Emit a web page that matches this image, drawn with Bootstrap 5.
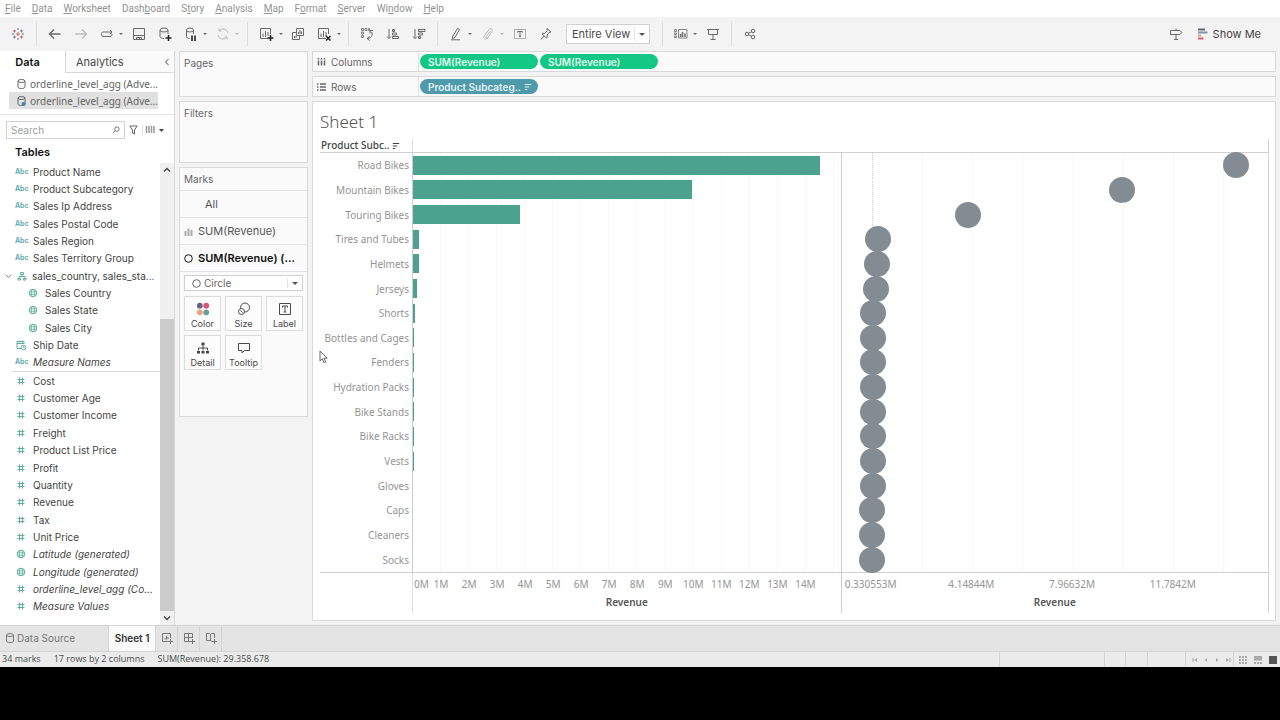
<!DOCTYPE html>
<html lang="en">
<head>
<meta charset="utf-8">
<meta name="viewport" content="width=device-width, initial-scale=1">
<title>Sheet 1</title>
<link href="https://cdn.jsdelivr.net/npm/bootstrap@5.3.0/dist/css/bootstrap.min.css" rel="stylesheet">
<style>
:root{--line:#d9d9d9;--ink:#4a4a4a;--teal:#4ba28f}
body{font-family:Inter,"Liberation Sans",sans-serif;font-size:10px;line-height:14px;color:var(--ink);background:#000}
svg{fill:none;flex:none}
svg:not([stroke]){stroke:currentColor}
button,select,input{font:inherit;color:inherit}
.app-shell{background:#f3f3f3}
.menu-bar{height:17px;gap:11px;padding:2px 5px 0;background:#fff;font-family:Roboto,sans-serif}
.menu-bar a{color:#929292;text-decoration:none}
.tool-bar{height:34px;padding:0 5px}
.tool-btn{border:0;background:none;padding:0;width:26px;height:26px;display:flex;align-items:center;justify-content:center;color:#6a6a6a}
.tool-btn.with-menu{width:32px;padding-left:2px;gap:5px}
.tool-btn.with-menu::after{content:"";border:2px solid transparent;border-top:2px solid currentColor;border-bottom:0}
.tool-btn.dim{color:#bbb}
.tool-btn.show-me{width:auto;font-size:11px;color:#444;gap:4px;padding:0 4px;margin:0 10px 0 4px}
.tool-sep{width:1px;height:24px;margin:0 5px;background:#dcdcdc}
.pick{position:relative;background:#fff;border:1px solid #d0d0d0}
.pick select{appearance:none;border:0;background:none;width:100%;height:100%;padding:0 0 0 5px;outline:0;display:block}
.pick::after{content:"";position:absolute;right:4px;top:50%;margin-top:-1px;border:3px solid transparent;border-top-color:#555;border-bottom:0;pointer-events:none}
.pick::before{content:"";position:absolute;right:14px;top:2px;bottom:2px;width:1px;background:#e4e4e4}
.view-pick{width:84px;height:20px;margin:0 7px;font-size:11px}
.side-pane{width:175px;background:#fff;border-right:1px solid var(--line)}
.pane-tab{height:22px;border:0;background:#fff;padding:0;font-size:11px}
.pane-tab.on{width:65px;padding-right:10px;color:#111;font-weight:600}
.pane-tab.off{border:1px solid var(--line);border-width:0 0 1px 1px;background:#fbfbfb;padding:0 4px 0 10px}
.sources{padding:2px 16px 5px 9px;border-bottom:1px solid #e3e3e3;font-family:"Noto Sans",sans-serif}
.sources a{height:17px;padding-left:8px;gap:4px;color:#666;text-decoration:none;white-space:nowrap}
.sources a.on{background:#e1e1e1}
.search-line{padding:6px 0 0 6px;gap:4px;color:#666}
.search-box{height:18px;width:119px;border:1px solid #d2d2d2}
.search-box input{border:0;outline:0;min-width:0;width:105px;padding:0 0 0 4px;background:none}
.search-box input::placeholder{color:#a0a0a0}
.fields-title{font-size:11px;font-weight:600;color:#111;margin:0;padding:6px 0 4px 15px;line-height:14px}
.fields{padding-bottom:10px}
.fields li{flex:1 1 0;min-height:16px;display:flex;align-items:center;gap:6px;padding-left:15px;white-space:nowrap;color:#444}
.fields svg,.abc{width:12px;flex:none;color:#5fae9c}
.abc{font-size:7px;font-weight:600;color:#5aa5aa;text-align:center;line-height:12px}
.fields li.sub{padding-left:27px}
.fields li.gen{font-style:italic}
.fields li.group{padding-left:5px;gap:4px}
.fields li.group svg:first-child{width:7px;color:#666}
.fields li.rule{border-top:1px solid var(--line);margin-left:12px;padding-left:3px}
.scroll-col{width:14px;background:#f0f0f0}
.scroll-col button{border:0;background:none;height:14px;padding:0;color:#444;display:flex;align-items:center;justify-content:center}
.scroll-thumb{background:#cbcbcb;flex:293 1 0}
.scroll-gap{flex:142 1 0}
.shelf-col{width:129px;margin:0 4px;gap:4px}
.shelf{background:#fafafa;border:1px solid var(--line)}
.shelf h2{font-size:10px;line-height:14px;font-weight:400;margin:0;padding:4px;color:#666}
.mark-row{height:27px;border:0;border-top:1px solid #e6e6e6;background:none;padding:0 4px;gap:5px;font-size:11px;color:#555;text-align:left;display:flex;align-items:center}
.mark-row.on{color:#111;font-weight:600}
.mark-row.all{padding-left:25px}
.mark-pick{height:16px;margin:3px 4px 5px;color:#666}
.mark-pick select{padding-left:19px}
.mark-pick svg{position:absolute;left:6px;top:2px}
.mark-grid{display:grid;grid-template-columns:repeat(3,1fr);gap:4px;padding:0 4px 46px}
.mark-grid button{height:35px;border:1px solid #dcdcdc;background:#fcfcfc;padding:4px 0 0;display:flex;flex-direction:column;align-items:center;font-size:9px;line-height:13px}
.lane{height:21px}
.lane-name{width:106px;border-right:1px solid #e3e3e3;padding-left:4px;gap:4px;color:#666}
.pills{padding-left:1px;gap:2px}
.pill{height:15px;width:118px;border:0;border-radius:8px;background:#13c784;color:#e0fbf0;font-weight:600;padding:0 8px;text-align:left;display:flex;align-items:center;gap:3px;white-space:nowrap}
.pill.dim-pill{background:#4f9aaa;color:#e2f3f6}
.viz{background:#fff;border:1px solid var(--line);padding:8px 6px 7px 7px;position:relative;font-family:"Noto Sans","Liberation Sans",sans-serif;color:#949494}
.viz h1{font-size:17px;line-height:24px;font-weight:300;color:#555;margin:0;height:29px}
.plot-row{display:grid;grid-template-columns:92px 1fr 1fr}
.plot-row>*+*{border-left:1px solid #cfcfcf}
.plot-row>:last-child{border-right:1px solid #d4d4d4}
.head-row{height:14px;border-bottom:1px solid #cfcfcf;color:#444}
.head-row>:first-child{font-weight:500;line-height:13px;padding-left:1px;white-space:nowrap}
.head-row>:nth-child(2),.axis-row>:nth-child(2){border-left-color:#dedede}
.head-row>:nth-child(3){border-left-color:transparent}
.marks-row{flex:1 1 0;min-height:24px}
.marks-row>:first-child{display:flex;align-items:center;justify-content:flex-end;padding-right:3px}
.bar-cell{display:flex;align-items:center;background:linear-gradient(90deg,transparent calc(100% - 1px),#f7f7f7 0) 0 0/6.56% 100%}
.bar-cell i{height:19px;min-width:1px;background:var(--teal)}
.dot-cell{position:relative;background:linear-gradient(90deg,#f6f6f6 1px,transparent 0) 30px 0/11.78% 100%}
.dot-cell i{position:absolute;top:50%;width:26px;height:26px;margin:-13px 0 0 -13px;border-radius:50%;background:#828c92}
.zero-line{background:repeating-linear-gradient(#d0d0d0 0 1px,transparent 1px 2px) 30px 0/1px 100% no-repeat,linear-gradient(90deg,#f6f6f6 1px,transparent 0) 30px 0/11.78% 100%}
.axis-row{border-top:1px solid #cfcfcf;height:41px}
.ticks{display:flex;height:20px;line-height:22px;white-space:nowrap;text-align:center}
.ticks span{flex:none;display:flex;justify-content:center}
.ticks.m span{width:6.56%}
.ticks.m span:first-child{width:3.28%;justify-content:flex-start;padding-left:1px}
.ticks.w{margin-left:-5%}
.ticks.w span{width:22.5%}
.axis-row b{display:block;text-align:center;font-weight:600;color:#555;line-height:18px}
.pointer{position:absolute;left:6px;top:248px;color:#666}
.sheet-bar{height:26px;border-top:1px solid #d4d4d4;background:#e4e4e4}
.sheet-bar button{border:0;border-right:1px solid #d4d4d4;background:none;padding:0 0 2px;color:#777;display:flex;align-items:center;justify-content:center;width:22px}
.sheet-bar .src-tab{width:109px;justify-content:flex-start;padding-left:6px;gap:3px}
.sheet-bar .sheet-tab{width:47px;background:#fafafa;color:#333;font-weight:600}
.status-bar{height:16px;border-top:1px solid #d4d4d4;background:#ebebeb;font-family:"Open Sans",sans-serif;font-size:9px;line-height:14px;padding-left:2px;gap:13px}
.status-bar .cell{border-left:1px solid #d4d4d4}
.status-bar .cell button{border:0;background:none;padding:0;width:11px;display:flex;justify-content:center;color:#aaa}
.foot-band{height:53px}
</style>
</head>
<body class="d-flex flex-column min-vh-100">
<svg width="0" height="0" class="position-absolute" aria-hidden="true">
<symbol id="i-db" viewBox="0 0 12 12"><ellipse cx="6" cy="3" rx="3.5" ry="1.5"/><path d="M2.500 3v6c0 2 7 2 7 0V3"/></symbol>
<symbol id="i-hash" viewBox="0 0 12 12"><path d="M4.500 2.500v7M7.500 2.500v7M2.500 4.500h7M2.500 7.500h7"/></symbol>
<symbol id="i-globe" viewBox="0 0 12 12"><circle cx="6" cy="6" r="3.800"/><ellipse cx="6" cy="6" rx="1.600" ry="3.800" stroke-width=".8"/><path d="M2.500 4.800h7M2.500 7.200h7" stroke-width=".8"/></symbol>
<symbol id="i-hier" viewBox="0 0 12 12"><path d="M4.500 2.500h3v2h-3zM6 4.500v2M3 8V6.500h6V8M2 8.500h2.500v1.500H2zM7.500 8.500H10v1.500H7.500z"/></symbol>
<symbol id="i-date" viewBox="0 0 12 12"><path d="M6 9.500H2v-7h7V5M2 4.500h7M4 1.500v2M7.500 1.500v2"/><circle cx="8.500" cy="8.500" r="2.300"/><path d="M8.500 7.300v1.300h1"/></symbol>
<symbol id="i-down" viewBox="0 0 8 8"><path d="M1 2.500l3 3 3-3"/></symbol>
<symbol id="i-sort" viewBox="0 0 10 10"><path d="M1 2h8M1 5h5.500M1 8h3" stroke-width="1.300"/></symbol>
<symbol id="i-chart" viewBox="0 0 16 16"><path d="M10 12.500H2.500v-10h10V8M5 11V7.500M7.500 11V5M10 10V6"/></symbol>
</svg>

<div class="app-shell d-flex flex-column flex-grow-1">
<nav class="menu-bar d-flex" aria-label="Main menu">
<a href="#"><u>F</u>ile</a><a href="#"><u>D</u>ata</a><a href="#"><u>W</u>orksheet</a><a href="#">Dash<u>b</u>oard</a><a href="#">S<u>t</u>ory</a><a href="#"><u>A</u>nalysis</a><a href="#"><u>M</u>ap</a><a href="#">F<u>o</u>rmat</a><a href="#"><u>S</u>erver</a><a href="#">Wi<u>n</u>dow</a><a href="#"><u>H</u>elp</a>
</nav>

<div class="tool-bar d-flex align-items-center" role="toolbar" aria-label="Tools">
<button class="tool-btn" aria-label="Start page"><svg width="14" height="14" viewBox="0 0 14 14"><path d="M7 5v4M5 7h4" stroke="#d8694f"/><path d="M3.500 2.500v3M2 4h3M10.500 8.500v3M9 10h3" stroke="#bd6a78"/><path d="M10.500 2.500v3M9 4h3M3.500 8.500v3M2 10h3" stroke="#8b7f8f"/><path d="M7 1v2M7 11v2M1 7h2M11 7h2" stroke="#667487"/></svg></button>
<span class="tool-sep"></span>
<button class="tool-btn" aria-label="Undo"><svg width="14" height="14" viewBox="0 0 14 14" stroke-width="1.500"><path d="M12.500 7h-11M6 2.500L1.500 7 6 11.500"/></svg></button>
<button class="tool-btn dim" aria-label="Redo"><svg width="14" height="14" viewBox="0 0 14 14" stroke-width="1.300"><path d="M1.500 7h11M8 2.500L12.500 7 8 11.500"/></svg></button>
<button class="tool-btn with-menu" aria-label="Replay"><svg width="14" height="14" viewBox="0 0 14 14"><path d="M3 9.500C1 9.500.8 5 3 5h9M10 3l2 2-2 2M3 9.500h7c2 0 2.500-2 1.500-3"/></svg></button>
<button class="tool-btn" aria-label="Save"><svg width="14" height="14" viewBox="0 0 14 14"><path d="M1.500 1.500h11v11h-11zM1.500 8.500h11M4.500 12V10.500h5V12M7.500 10.500V12"/></svg></button>
<button class="tool-btn" aria-label="New data source"><svg width="16" height="16" viewBox="0 0 16 16"><ellipse cx="7" cy="4" rx="4" ry="2"/><path d="M3 4v6.500c0 1.200 1.500 2 4 2M11 4v4"/><path d="M11.500 9v6M8.500 12h6" stroke="#222" stroke-width="1.500"/></svg></button>
<button class="tool-btn with-menu" aria-label="Pause updates"><svg width="14" height="16" viewBox="0 0 14 16"><ellipse cx="6" cy="4" rx="3.500" ry="2"/><path d="M2.500 4v6.500c0 1.200 1 2 3 2M9.500 4v4"/><path d="M8 9.500V15M11 9.500V15" stroke="#222" stroke-width="1.600"/></svg></button>
<button class="tool-btn with-menu dim" aria-label="Refresh"><svg width="14" height="14" viewBox="0 0 14 14"><path d="M2 8a5 5 0 0 0 9 2M12 6a5 5 0 0 0-9-2M3 1.500V4h2.500M11 12.500V10H8.500"/></svg></button>
<span class="tool-sep"></span>
<button class="tool-btn with-menu" aria-label="New worksheet"><svg width="16" height="16"><use href="#i-chart"/><path d="M12.500 9v6M9.500 12h6" stroke="#222" stroke-width="1.500"/></svg></button>
<button class="tool-btn" aria-label="Duplicate"><svg width="14" height="14" viewBox="0 0 14 14"><path d="M5.500 1.500h7v7h-7zM7.500 7V5M9 7V3M10.500 7V4.500M5.500 5.500h-4v7h7v-4M3.500 11V9M5 11V9"/></svg></button>
<button class="tool-btn with-menu" aria-label="Clear sheet"><svg width="16" height="16"><use href="#i-chart"/><path d="M10 10l4.500 4.500M14.500 10L10 14.500" stroke="#222" stroke-width="1.500"/></svg></button>
<span class="tool-sep"></span>
<button class="tool-btn" aria-label="Swap rows and columns"><svg width="14" height="14" viewBox="0 0 14 14"><path d="M1.500 1.500h2v2h-2zM5 1.500h2v2H5zM8.500 1.500h1v2h-1zM1.500 5h2v2h-2zM1.500 8.500h2v2h-2z" stroke-width=".8"/><path d="M10.500 4c3 2 2 7-3 7.500M10 6.500V3.500h3M9.500 9.500l-2.500 2 2.500 2"/></svg></button>
<button class="tool-btn" aria-label="Sort ascending"><svg width="14" height="14" viewBox="0 0 14 14"><path d="M3 2v9.500M1 9.500l2 2 2-2M6.500 2.500h2v2h-2zM6.500 6h4v2h-4zM6.500 9.500h6v2h-6z"/></svg></button>
<button class="tool-btn" aria-label="Sort descending"><svg width="14" height="14" viewBox="0 0 14 14"><path d="M3 2v9.500M1 9.500l2 2 2-2M6.500 2.500h6.500v2H6.500zM6.500 6h4v2h-4zM6.500 9.500h2v2h-2z"/></svg></button>
<span class="tool-sep"></span>
<button class="tool-btn with-menu" aria-label="Highlight"><svg width="14" height="14" viewBox="0 0 14 14"><path d="M3.500 9.500L8.500 1.500l2 1-4.500 8-2.500 1zM2 12.800h9"/></svg></button>
<button class="tool-btn with-menu dim" aria-label="Group"><svg width="14" height="14" viewBox="0 0 14 14"><path d="M9.500 4L5 9.500c-.8 1.500 1 2 1.800 1L11 4.500c1.500-2.500-1.500-4-3-1.800L3.500 8.500c-2 3 1 5 3.500 2.500"/></svg></button>
<button class="tool-btn" aria-label="Show mark labels"><svg width="14" height="14" viewBox="0 0 14 14"><path d="M1.500 2.500h11v9h-11z" stroke-dasharray="1 1"/><path d="M4.500 5.500v-1h5v1M7 4.500v5M6 9.500h2"/></svg></button>
<button class="tool-btn" aria-label="Fix axes"><svg width="12" height="14" viewBox="0 0 12 14"><path d="M7 1.500l4 3.500-1 .5-.8-.2-2 2.700.1 2L6.500 11 2 7l.8-.8 2 .2 2.400-2.700zM4.200 9L1 12.500"/></svg></button>
<label class="pick view-pick"><select aria-label="Fit"><option>Entire View</option></select></label>
<span class="tool-sep"></span>
<button class="tool-btn with-menu" aria-label="Show cards"><svg width="15" height="14" viewBox="0 0 15 14"><path d="M1.500 2.500h2v2h-2zM1.500 6h2v1.500h-2zM1.500 9h2v1.500h-2zM5.500 2.500h8.500v8.500H5.500z" stroke-width=".8"/><path d="M7.500 10V7M9.500 10V5M12 10V6.500" stroke-width="1.500"/></svg></button>
<button class="tool-btn" aria-label="Presentation mode"><svg width="14" height="14" viewBox="0 0 14 14"><path d="M1 2.500h12M2.500 2.500v5h9v-5M7 7.500V12M4.500 12.500h5"/></svg></button>
<span class="tool-sep"></span>
<button class="tool-btn" aria-label="Share"><svg width="12" height="12" viewBox="0 0 12 12"><circle cx="3" cy="6" r="1.800"/><circle cx="9" cy="3" r="1.800"/><circle cx="9" cy="9" r="1.800"/><path d="M4.600 5.200l2.800-1.400M4.600 6.800l2.800 1.400"/></svg></button>
<button class="tool-btn ms-auto" aria-label="Guide"><svg width="14" height="14" viewBox="0 0 14 14"><path d="M1.500 3.500h9.500l1.800 2-1.800 2H1.500zM7 1.500v2M7 7.500v5M5 12.500h4"/></svg></button>
<button class="tool-btn show-me"><svg width="12" height="12" viewBox="0 0 12 12" stroke-width="2"><path d="M1 1.500h7" stroke="#5f6673"/><path d="M1 4.500h9.500" stroke="#8592a5"/><path d="M1 7.500h3" stroke="#e79a7c"/><path d="M1 10.500h5.500" stroke="#cc6175"/></svg>Show Me</button>
</div>

<div class="d-flex flex-grow-1">
<aside class="side-pane d-flex flex-column flex-shrink-0">
<div class="d-flex">
<button class="pane-tab on">Data</button>
<button class="pane-tab off flex-grow-1 d-flex align-items-center justify-content-between">Analytics<svg width="6" height="8" viewBox="0 0 6 8"><path d="M4.500 1l-3 3 3 3"/></svg></button>
</div>
<div class="sources">
<a href="#" class="d-flex align-items-center"><svg width="9" height="12" viewBox="2 0 8 12"><use href="#i-db" width="12" height="12"/></svg>orderline_level_agg (Adve...</a>
<a href="#" class="on d-flex align-items-center"><svg width="9" height="12" viewBox="2 0 8 12"><use href="#i-db" width="12" height="12"/><circle cx="8" cy="9" r="2" fill="#3d84a8" stroke="none"/></svg>orderline_level_agg (Adve...</a>
</div>
<div class="search-line d-flex align-items-center">
<div class="search-box d-flex align-items-center"><input type="text" placeholder="Search" aria-label="Search"><svg width="8" height="8" viewBox="0 0 9 9"><circle cx="5.500" cy="3.500" r="2.500"/><path d="M3.700 5.300L1 8"/></svg></div>
<svg width="9" height="10" viewBox="0 0 9 10"><path d="M.8 1h7.400L5.500 5v4L3.500 8V5z"/></svg>
<svg width="22" height="10" viewBox="0 0 22 10"><path d="M.5 0v10" stroke="#ddd"/><path d="M4.500 1v7M7 1v7M9.500 1v7M12 1v7" stroke="#999" stroke-width="1.500"/><path d="M17 4h5l-2.500 3z" fill="#444" stroke="none"/></svg>
</div>
<h2 class="fields-title">Tables</h2>
<div class="d-flex flex-grow-1">
<ul class="fields list-unstyled d-flex flex-column flex-grow-1 mb-0">
<li><span class="abc">Abc</span>Product Name</li>
<li><span class="abc">Abc</span>Product Subcategory</li>
<li><span class="abc">Abc</span>Sales Ip Address</li>
<li><span class="abc">Abc</span>Sales Postal Code</li>
<li><span class="abc">Abc</span>Sales Region</li>
<li><span class="abc">Abc</span>Sales Territory Group</li>
<li class="group"><svg height="8"><use href="#i-down" width="7" height="8"/></svg><svg height="12"><use href="#i-hier"/></svg>sales_country, sales_sta...</li>
<li class="sub"><svg height="12"><use href="#i-globe"/></svg>Sales Country</li>
<li class="sub"><svg height="12"><use href="#i-globe"/></svg>Sales State</li>
<li class="sub"><svg height="12"><use href="#i-globe"/></svg>Sales City</li>
<li><svg height="12"><use href="#i-date"/></svg>Ship Date</li>
<li class="gen"><span class="abc fst-normal">Abc</span>Measure Names</li>
<li class="rule"><svg height="12"><use href="#i-hash"/></svg>Cost</li>
<li><svg height="12"><use href="#i-hash"/></svg>Customer Age</li>
<li><svg height="12"><use href="#i-hash"/></svg>Customer Income</li>
<li><svg height="12"><use href="#i-hash"/></svg>Freight</li>
<li><svg height="12"><use href="#i-hash"/></svg>Product List Price</li>
<li><svg height="12"><use href="#i-hash"/></svg>Profit</li>
<li><svg height="12"><use href="#i-hash"/></svg>Quantity</li>
<li><svg height="12"><use href="#i-hash"/></svg>Revenue</li>
<li><svg height="12"><use href="#i-hash"/></svg>Tax</li>
<li><svg height="12"><use href="#i-hash"/></svg>Unit Price</li>
<li class="gen"><svg height="12"><use href="#i-globe"/></svg>Latitude (generated)</li>
<li class="gen"><svg height="12"><use href="#i-globe"/></svg>Longitude (generated)</li>
<li class="gen"><svg height="12"><use href="#i-hash"/></svg>orderline_level_agg (Co...</li>
<li class="gen"><svg height="12"><use href="#i-hash"/></svg>Measure Values</li>
</ul>
<div class="scroll-col d-flex flex-column flex-shrink-0">
<button aria-label="Scroll up"><svg width="8" height="8" viewBox="0 0 8 8" stroke-width="1.400"><path d="M1 5.500l3-3 3 3"/></svg></button>
<div class="scroll-gap"></div><div class="scroll-thumb"></div>
<button aria-label="Scroll down"><svg width="8" height="8" stroke-width="1.400"><use href="#i-down"/></svg></button>
</div>
</div>
</aside>

<section class="shelf-col d-flex flex-column flex-shrink-0">
<div class="shelf" style="height:46px"><h2>Pages</h2></div>
<div class="shelf" style="height:62px"><h2>Filters</h2></div>
<div class="shelf d-flex flex-column">
<h2>Marks</h2>
<button class="mark-row all">All</button>
<button class="mark-row"><svg width="9" height="9" viewBox="0 0 9 9" stroke="#aaa" stroke-width="2"><path d="M1.500 9V4M4.500 9V1.500M7.500 9V3"/></svg>SUM(Revenue)</button>
<button class="mark-row on"><svg width="9" height="9" viewBox="0 0 9 9"><circle cx="4.500" cy="4.500" r="3.800"/></svg>SUM(Revenue) (...</button>
<div class="border-top"></div>
<label class="pick mark-pick"><svg width="11" height="11" viewBox="0 0 11 11"><circle cx="5.500" cy="5.500" r="3.800"/></svg><select aria-label="Mark type"><option>Circle</option></select></label>
<div class="mark-grid">
<button><svg width="14" height="16" viewBox="0 0 14 16" stroke="none"><circle cx="3.800" cy="4.700" r="2.900" fill="#6b6480"/><circle cx="10.200" cy="4.700" r="2.900" fill="#d9567c"/><circle cx="3.800" cy="11.300" r="2.900" fill="#eda27f"/><circle cx="10.200" cy="11.300" r="2.900" fill="#6d9c9b"/></svg>Color</button>
<button><svg width="14" height="16" viewBox="0 0 14 16"><circle cx="8" cy="6.500" r="4.500"/><circle cx="4.500" cy="10.500" r="3" fill="#fcfcfc"/><path d="M3.500 9.500l2 2"/></svg>Size</button>
<button><svg width="14" height="16" viewBox="0 0 14 16"><path d="M1.500 2.500h11v11h-11zM4.500 6.500v-1.500h5v1.500M7 5v6M5.700 11h2.600"/></svg>Label</button>
<button><svg width="14" height="16" viewBox="0 0 14 16"><path d="M7 5.500v5M2.500 10.500V8h9v2.500"/><path d="M5.500 2.500h3v3h-3zM1 11h3v2.500H1zM5.500 11h3v2.500h-3zM10 11h3v2.500h-3z" fill="#444" stroke="none"/></svg>Detail</button>
<button><svg width="14" height="16" viewBox="0 0 14 16"><path d="M1.500 3.500h11v7H7.500l-2.500 2.500v-2.500H1.500z"/></svg>Tooltip</button>
</div>
</div>
</section>

<main class="d-flex flex-column flex-grow-1 me-1">
<div class="shelf lane d-flex mb-1">
<div class="lane-name d-flex align-items-center"><svg width="10" height="10" viewBox="0 0 10 10" stroke-width="1.500" stroke-dasharray="1.500 1 5"><path d="M1.500 1v8M4.500 1v8M7.500 1v8"/></svg>Columns</div>
<div class="pills d-flex align-items-center"><button class="pill">SUM(Revenue)</button><button class="pill">SUM(Revenue)</button></div>
</div>
<div class="shelf lane d-flex mb-1">
<div class="lane-name d-flex align-items-center"><svg width="10" height="10" viewBox="0 0 10 10" stroke-width="1.300"><path d="M0 2h1.500M3 2h6M0 5h1.500M3 5h6M0 8h1.500M3 8h6"/></svg>Rows</div>
<div class="pills d-flex align-items-center"><button class="pill dim-pill">Product Subcateg..<svg width="8" height="8"><use href="#i-sort"/></svg></button></div>
</div>
<div class="viz d-flex flex-column flex-grow-1">
<h1>Sheet 1</h1>
<div class="plot-row head-row"><div>Product Subc.. <svg width="8" height="8"><use href="#i-sort"/></svg></div><div></div><div></div></div>
<div class="plot-row marks-row"><div>Road Bikes</div><div class="bar-cell"><i style="width:95.2%"></i></div><div class="dot-cell zero-line"><i style="left:92.6%"></i></div></div>
<div class="plot-row marks-row"><div>Mountain Bikes</div><div class="bar-cell"><i style="width:65.3%"></i></div><div class="dot-cell zero-line"><i style="left:65.7%"></i></div></div>
<div class="plot-row marks-row"><div>Touring Bikes</div><div class="bar-cell"><i style="width:25.1%"></i></div><div class="dot-cell zero-line"><i style="left:29.7%"></i></div></div>
<div class="plot-row marks-row"><div>Tires and Tubes</div><div class="bar-cell"><i style="width:1.4%"></i></div><div class="dot-cell"><i style="left:8.5%"></i></div></div>
<div class="plot-row marks-row"><div>Helmets</div><div class="bar-cell"><i style="width:1.3%"></i></div><div class="dot-cell"><i style="left:8.3%"></i></div></div>
<div class="plot-row marks-row"><div>Jerseys</div><div class="bar-cell"><i style="width:0.9%"></i></div><div class="dot-cell"><i style="left:8.1%"></i></div></div>
<div class="plot-row marks-row"><div>Shorts</div><div class="bar-cell"><i style="width:0.4%"></i></div><div class="dot-cell"><i style="left:7.5%"></i></div></div>
<div class="plot-row marks-row"><div>Bottles and Cages</div><div class="bar-cell"><i style="width:0.2%"></i></div><div class="dot-cell"><i style="left:7.4%"></i></div></div>
<div class="plot-row marks-row"><div>Fenders</div><div class="bar-cell"><i style="width:0.2%"></i></div><div class="dot-cell"><i style="left:7.3%"></i></div></div>
<div class="plot-row marks-row"><div>Hydration Packs</div><div class="bar-cell"><i style="width:0.2%"></i></div><div class="dot-cell"><i style="left:7.3%"></i></div></div>
<div class="plot-row marks-row"><div>Bike Stands</div><div class="bar-cell"><i style="width:0.2%"></i></div><div class="dot-cell"><i style="left:7.3%"></i></div></div>
<div class="plot-row marks-row"><div>Bike Racks</div><div class="bar-cell"><i style="width:0.2%"></i></div><div class="dot-cell"><i style="left:7.3%"></i></div></div>
<div class="plot-row marks-row"><div>Vests</div><div class="bar-cell"><i style="width:0.2%"></i></div><div class="dot-cell"><i style="left:7.3%"></i></div></div>
<div class="plot-row marks-row"><div>Gloves</div><div class="bar-cell"></div><div class="dot-cell"><i style="left:7.3%"></i></div></div>
<div class="plot-row marks-row"><div>Caps</div><div class="bar-cell"></div><div class="dot-cell"><i style="left:7.2%"></i></div></div>
<div class="plot-row marks-row"><div>Cleaners</div><div class="bar-cell"></div><div class="dot-cell"><i style="left:7.2%"></i></div></div>
<div class="plot-row marks-row"><div>Socks</div><div class="bar-cell"></div><div class="dot-cell"><i style="left:7.2%"></i></div></div>
<div class="plot-row axis-row"><div></div>
<div><div class="ticks m"><span>0M</span><span>1M</span><span>2M</span><span>3M</span><span>4M</span><span>5M</span><span>6M</span><span>7M</span><span>8M</span><span>9M</span><span>10M</span><span>11M</span><span>12M</span><span>13M</span><span>14M</span></div><b>Revenue</b></div>
<div><div class="ticks w"><span>0.330553M</span><span>4.14844M</span><span>7.96632M</span><span>11.7842M</span></div><b>Revenue</b></div>
</div>
<svg class="pointer" width="9" height="14" viewBox="0 0 9 14"><path d="M1 1v10l2.300-2.200 1.700 4 1.700-.8-1.700-3.800h3.200z" fill="#fff"/></svg>
</div>
<div class="pt-1"></div>
</main>
</div>

<div class="sheet-bar d-flex">
<button class="src-tab"><svg width="8" height="12" viewBox="2 0 8 12"><use href="#i-db" width="12" height="12"/></svg>Data Source</button>
<button class="sheet-tab">Sheet 1</button>
<button aria-label="New worksheet"><svg width="12" height="12" viewBox="0 0 12 12"><path d="M7 9.500H1.500v-8h8V6M4 7.500V6M5.500 7.500V4M7 7V5M9.500 7v5M7 9.500h5"/></svg></button>
<button aria-label="New dashboard"><svg width="12" height="12" viewBox="0 0 12 12"><path d="M7 9.500H1.500v-8h8V6M1.500 5.500h8M5.500 1.500v8M9.500 7v5M7 9.500h5"/></svg></button>
<button aria-label="New story"><svg width="12" height="12" viewBox="0 0 12 12"><path d="M7 9.500L5.500 8.500H1.500v-7h3l1 1 1-1h3V6M5.500 2.500v6M9.500 7v5M7 9.500h5"/></svg></button>
</div>
<footer class="status-bar d-flex"><span>34 marks</span><span>17 rows by 2 columns</span><span>SUM(Revenue): 29.358.678</span>
<div class="d-flex ms-auto">
<span class="cell" style="width:105px"></span><span class="cell" style="width:21px"></span><span class="cell" style="width:22px"></span><span class="cell" style="width:38px"></span>
<div class="cell d-flex align-items-center ps-1" style="width:48px">
<button aria-label="First"><svg width="6" height="6" viewBox="0 0 6 6"><path d="M1 1v4"/><path d="M5 1v4L2 3z" fill="currentColor" stroke="none"/></svg></button>
<button aria-label="Previous"><svg width="6" height="6" viewBox="0 0 6 6"><path d="M4 1v4L1.500 3z" fill="currentColor" stroke="none"/></svg></button>
<button aria-label="Next"><svg width="6" height="6" viewBox="0 0 6 6"><path d="M2 1v4l2.500-2z" fill="currentColor" stroke="none"/></svg></button>
<button aria-label="Last"><svg width="6" height="6" viewBox="0 0 6 6"><path d="M5 1v4"/><path d="M1 1v4l3-2z" fill="currentColor" stroke="none"/></svg></button>
</div>
<div class="cell d-flex align-items-center gap-1" style="padding:0 2px 0 3px">
<button aria-label="Grid view"><svg width="8" height="8" viewBox="0 0 8 8" stroke-width="2" stroke-dasharray="2 1"><path d="M0 1h8M0 4h8M0 7h8"/></svg></button>
<button aria-label="Filmstrip"><svg width="8" height="8" viewBox="0 0 8 8"><path d="M0 0h8v4.500H0z" fill="currentColor" stroke="none"/><path d="M0 7h8" stroke-width="2" stroke-dasharray="2 1"/></svg></button>
<button aria-label="Sheet view"><svg width="8" height="8" viewBox="0 0 8 8"><path d="M0 0h8v8H0z" fill="#555" stroke="none"/></svg></button>
</div>
</div>
</footer>
</div>
<div class="foot-band flex-shrink-0"></div>
<script src="https://cdn.jsdelivr.net/npm/bootstrap@5.3.0/dist/js/bootstrap.bundle.min.js"></script>
</body>
</html>
